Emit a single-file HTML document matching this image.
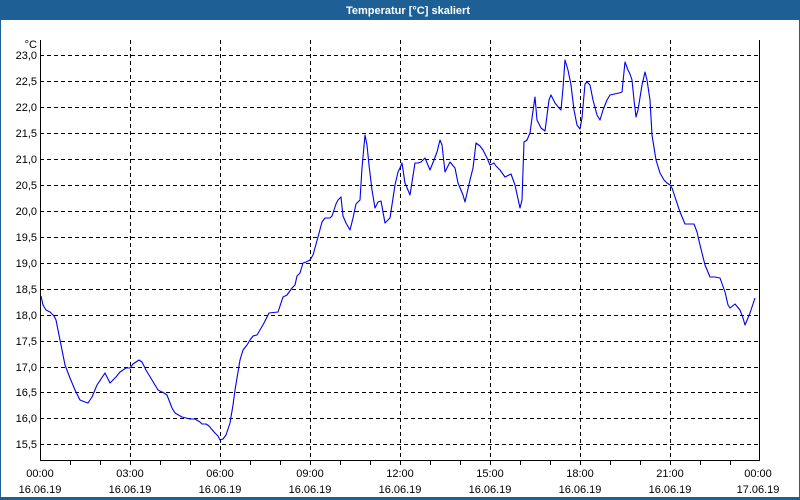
<!DOCTYPE html>
<html><head><meta charset="utf-8"><style>
html,body{margin:0;padding:0;background:#fff}
svg{display:block}
text{font-family:"Liberation Sans","DejaVu Sans",sans-serif;font-size:11px;fill:#000}
</style></head><body>
<svg width="800" height="500" viewBox="0 0 800 500" xmlns="http://www.w3.org/2000/svg">
<rect x="0" y="0" width="800" height="500" fill="#1e6096"/>
<rect x="1" y="20" width="798" height="477" fill="#fff"/>
<text x="408" y="14" text-anchor="middle" style="font-weight:bold;fill:#fff;font-size:11px">Temperatur [°C] skaliert</text>
<g stroke="#000" stroke-width="1" stroke-dasharray="4,3" shape-rendering="crispEdges">
<line x1="40" y1="55.5" x2="760" y2="55.5"/>
<line x1="40" y1="81.5" x2="760" y2="81.5"/>
<line x1="40" y1="107.5" x2="760" y2="107.5"/>
<line x1="40" y1="133.5" x2="760" y2="133.5"/>
<line x1="40" y1="159.5" x2="760" y2="159.5"/>
<line x1="40" y1="185.5" x2="760" y2="185.5"/>
<line x1="40" y1="211.5" x2="760" y2="211.5"/>
<line x1="40" y1="237.5" x2="760" y2="237.5"/>
<line x1="40" y1="263.5" x2="760" y2="263.5"/>
<line x1="40" y1="289.5" x2="760" y2="289.5"/>
<line x1="40" y1="315.5" x2="760" y2="315.5"/>
<line x1="40" y1="341.5" x2="760" y2="341.5"/>
<line x1="40" y1="367.5" x2="760" y2="367.5"/>
<line x1="40" y1="392.5" x2="760" y2="392.5"/>
<line x1="40" y1="418.5" x2="760" y2="418.5"/>
<line x1="40" y1="444.5" x2="760" y2="444.5"/>
<line x1="130.5" y1="40" x2="130.5" y2="460"/>
<line x1="220.5" y1="40" x2="220.5" y2="460"/>
<line x1="310.5" y1="40" x2="310.5" y2="460"/>
<line x1="400.5" y1="40" x2="400.5" y2="460"/>
<line x1="490.5" y1="40" x2="490.5" y2="460"/>
<line x1="580.5" y1="40" x2="580.5" y2="460"/>
<line x1="670.5" y1="40" x2="670.5" y2="460"/>
</g>
<g stroke="#000" stroke-width="1" shape-rendering="crispEdges">
<line x1="40.5" y1="40" x2="40.5" y2="461"/>
<line x1="759.5" y1="40" x2="759.5" y2="461"/>
<line x1="40" y1="460.5" x2="760" y2="460.5"/>
<line x1="70.5" y1="460" x2="70.5" y2="465"/><line x1="100.5" y1="460" x2="100.5" y2="465"/>
<line x1="130.5" y1="460" x2="130.5" y2="465"/><line x1="160.5" y1="460" x2="160.5" y2="465"/>
<line x1="190.5" y1="460" x2="190.5" y2="465"/><line x1="220.5" y1="460" x2="220.5" y2="465"/>
<line x1="250.5" y1="460" x2="250.5" y2="465"/><line x1="280.5" y1="460" x2="280.5" y2="465"/>
<line x1="310.5" y1="460" x2="310.5" y2="465"/><line x1="340.5" y1="460" x2="340.5" y2="465"/>
<line x1="370.5" y1="460" x2="370.5" y2="465"/><line x1="400.5" y1="460" x2="400.5" y2="465"/>
<line x1="430.5" y1="460" x2="430.5" y2="465"/><line x1="460.5" y1="460" x2="460.5" y2="465"/>
<line x1="490.5" y1="460" x2="490.5" y2="465"/><line x1="520.5" y1="460" x2="520.5" y2="465"/>
<line x1="550.5" y1="460" x2="550.5" y2="465"/><line x1="580.5" y1="460" x2="580.5" y2="465"/>
<line x1="610.5" y1="460" x2="610.5" y2="465"/><line x1="640.5" y1="460" x2="640.5" y2="465"/>
<line x1="670.5" y1="460" x2="670.5" y2="465"/><line x1="700.5" y1="460" x2="700.5" y2="465"/>
<line x1="730.5" y1="460" x2="730.5" y2="465"/>
</g>
<g text-anchor="end">
<text x="37" y="48">°C</text>
<text x="37" y="59">23,0</text><text x="37" y="85">22,5</text><text x="37" y="111">22,0</text>
<text x="37" y="137">21,5</text><text x="37" y="163">21,0</text><text x="37" y="189">20,5</text>
<text x="37" y="215">20,0</text><text x="37" y="241">19,5</text><text x="37" y="267">19,0</text>
<text x="37" y="293">18,5</text><text x="37" y="319">18,0</text><text x="37" y="345">17,5</text>
<text x="37" y="371">17,0</text><text x="37" y="396">16,5</text><text x="37" y="422">16,0</text>
<text x="37" y="448">15,5</text>
</g>
<g text-anchor="middle">
<text x="40" y="477">00:00</text><text x="40" y="493">16.06.19</text>
<text x="130" y="477">03:00</text><text x="130" y="493">16.06.19</text>
<text x="220" y="477">06:00</text><text x="220" y="493">16.06.19</text>
<text x="310" y="477">09:00</text><text x="310" y="493">16.06.19</text>
<text x="400" y="477">12:00</text><text x="400" y="493">16.06.19</text>
<text x="490" y="477">15:00</text><text x="490" y="493">16.06.19</text>
<text x="580" y="477">18:00</text><text x="580" y="493">16.06.19</text>
<text x="670" y="477">21:00</text><text x="670" y="493">16.06.19</text>
<text x="758" y="477">00:00</text><text x="758" y="493">17.06.19</text>
</g>
<polyline fill="none" stroke="#0000ee" stroke-width="1.1" stroke-linejoin="round" points="41,296 43,305 46,310 50,312 54,316 56,320 60,340 65,365 70,378 75,390 80,400 85,402 88,403 92,397 97,385 105,373 110,383 116,377 120,372 126,368 130,368 133,364 139,360 142,362 146,370 152,380 158,390 164,393 167,395 172,408 175,413 182,417 190,419 195,419 200,422 202,424 206,424 209,426 214,432 218,436 220,440 223,439 226,435 230,423 233,405 235,390 240,360 243,350 247,345 250,340 253,336 257,335 260,330 264,323 269,313 278,312 283,297 287,295 292,288 295,285 297,276 300,273 303,263 306,262 310,260 313,255 318,237 322,222 325,218 330,218 332,216 336,204 338,200 341,197 343,216 346,223 350,230 353,218 356,204 360,200 362,168 365,135 367,145 369,165 372,190 375,208 378,202 381,201 385,223 388,220 390,218 395,185 398,172 400,168 402,163 405,183 410,195 415,163 418,163 421,162 425,158 430,170 434,160 437,152 440,140 442,145 445,172 450,162 455,168 458,183 463,195 465,202 470,180 473,168 476,143 480,146 483,150 487,158 490,165 494,163 496,166 500,170 505,177 507,176 511,174 515,185 520,208 522,200 524,142 527,140 530,133 532,118 535,97 537,120 541,128 545,131 549,100 551,95 555,103 559,108 561,110 563,88 565,60 568,70 571,85 574,110 577,125 580,129 582,118 585,84 587,82 590,85 593,100 597,115 600,120 603,110 607,100 610,95 619,93 622,92 625,62 628,70 630,74 632,80 634,100 636,117 638,110 642,85 645,72 647,80 650,100 652,135 656,160 660,173 664,180 667,183 670,185 672,188 676,200 680,212 685,224 694,224 697,232 700,245 705,265 710,277 715,277 720,278 725,292 728,305 730,308 735,304 740,310 743,318 745,325 750,313 755,298"/>
</svg>
</body></html>
